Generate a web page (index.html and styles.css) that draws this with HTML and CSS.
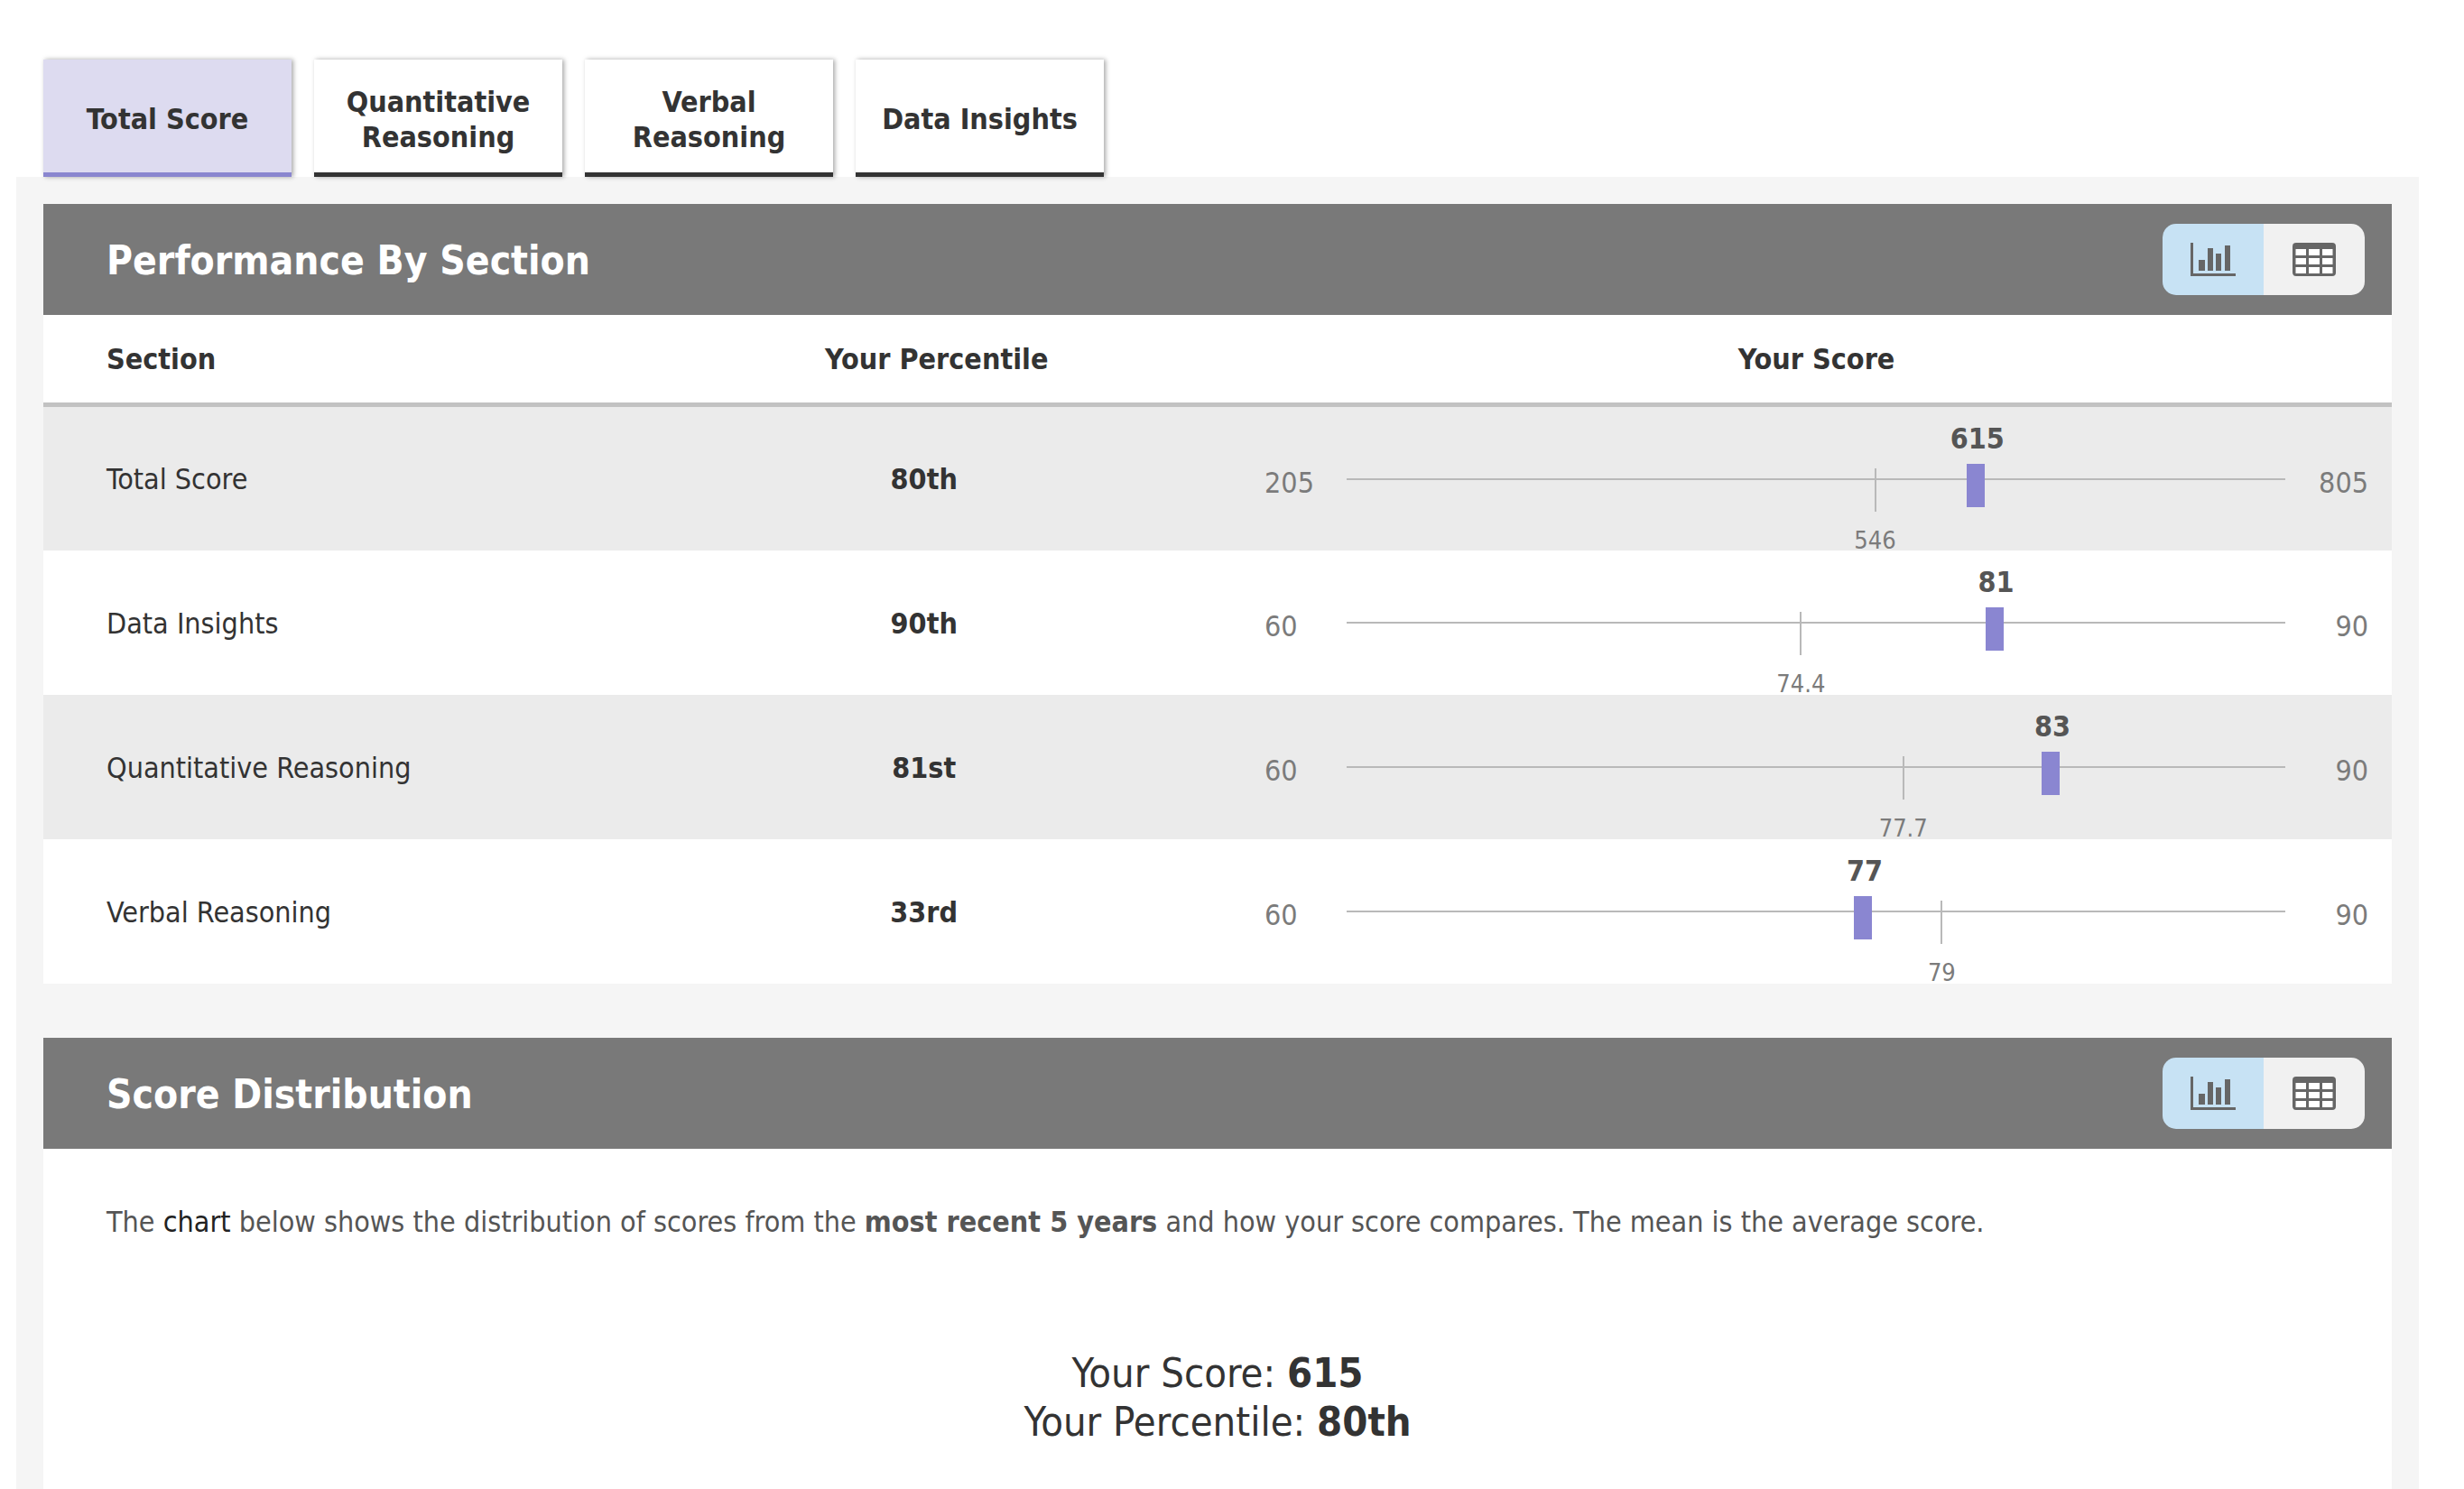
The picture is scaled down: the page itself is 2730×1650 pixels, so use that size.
FILE: index.html
```html
<!DOCTYPE html>
<html lang="en">

<head>
    <meta charset="UTF-8">
    <meta name="viewport" content="width=device-width, initial-scale=1.0">
    <title>Score Report</title>
    <link rel="stylesheet" href="styles.css">
</head>

<body>
    <!-- Icons shared by both view toggles -->
    <svg class="icon-defs" aria-hidden="true">
        <symbol id="icon-chart" viewBox="0 0 50 37">
            <path d="M0 0h3v34h47v3H0z M9 19h7v12H9z M19 6h6v25h-6z M28 12h6v19h-6z M38 3h6v28h-6z" />
        </symbol>
        <symbol id="icon-table" viewBox="0 0 48 37">
            <rect width="48" height="37" rx="4" />
            <path fill="#fff" d="M3.5 7H15v7H3.5z M18 7h12v7H18z M33 7h11.5v7H33z M3.5 17H15v7H3.5z M18 17h12v7H18z M33 17h11.5v7H33z M3.5 27H15v7H3.5z M18 27h12v7H18z M33 27h11.5v7H33z" />
        </symbol>
    </svg>

    <nav class="tabs">
        <button class="tab active" type="button">Total Score</button>
        <button class="tab" type="button">Quantitative Reasoning</button>
        <button class="tab" type="button">Verbal Reasoning</button>
        <button class="tab" type="button">Data Insights</button>
    </nav>

    <main class="report">
        <section class="card">
            <div class="card-header">
                <h2>Performance By Section</h2>
                <div class="view-toggle">
                    <button class="selected" type="button" aria-label="Chart view"><svg width="50" height="37"><use href="#icon-chart" /></svg></button>
                    <button type="button" aria-label="Table view"><svg width="48" height="37"><use href="#icon-table" /></svg></button>
                </div>
            </div>

            <table class="sections">
                <thead>
                    <tr>
                        <th class="col-section">Section</th>
                        <th class="col-percentile">Your Percentile</th>
                        <th class="col-score">Your Score</th>
                    </tr>
                </thead>
                <tbody>
                    <tr>
                        <td class="name">Total Score</td>
                        <td class="percentile">80th</td>
                        <td class="score">
                            <div class="range">
                                <span class="limit">205</span>
                                <div class="track">
                                    <div class="mean" style="left: 56.3%"><span>546</span></div>
                                    <div class="marker" style="left: 67%"><span>615</span></div>
                                </div>
                                <span class="limit max">805</span>
                            </div>
                        </td>
                    </tr>
                    <tr>
                        <td class="name">Data Insights</td>
                        <td class="percentile">90th</td>
                        <td class="score">
                            <div class="range">
                                <span class="limit">60</span>
                                <div class="track">
                                    <div class="mean" style="left: 48.4%"><span>74.4</span></div>
                                    <div class="marker" style="left: 69%"><span>81</span></div>
                                </div>
                                <span class="limit max">90</span>
                            </div>
                        </td>
                    </tr>
                    <tr>
                        <td class="name">Quantitative Reasoning</td>
                        <td class="percentile">81st</td>
                        <td class="score">
                            <div class="range">
                                <span class="limit">60</span>
                                <div class="track">
                                    <div class="mean" style="left: 59.3%"><span>77.7</span></div>
                                    <div class="marker" style="left: 75%"><span>83</span></div>
                                </div>
                                <span class="limit max">90</span>
                            </div>
                        </td>
                    </tr>
                    <tr>
                        <td class="name">Verbal Reasoning</td>
                        <td class="percentile">33rd</td>
                        <td class="score">
                            <div class="range">
                                <span class="limit">60</span>
                                <div class="track">
                                    <div class="mean" style="left: 63.4%"><span>79</span></div>
                                    <div class="marker" style="left: 55%"><span>77</span></div>
                                </div>
                                <span class="limit max">90</span>
                            </div>
                        </td>
                    </tr>
                </tbody>
            </table>
        </section>

        <section class="card distribution">
            <div class="card-header">
                <h2>Score Distribution</h2>
                <div class="view-toggle">
                    <button class="selected" type="button" aria-label="Chart view"><svg width="50" height="37"><use href="#icon-chart" /></svg></button>
                    <button type="button" aria-label="Table view"><svg width="48" height="37"><use href="#icon-table" /></svg></button>
                </div>
            </div>

            <p class="intro">The <span class="view-name">chart</span> below shows the distribution of scores from the <strong>most recent 5 years</strong> and how your score compares. The mean is the average score.</p>

            <div class="summary">
                <p>Your Score: <strong>615</strong></p>
                <p>Your Percentile: <strong>80th</strong></p>
            </div>
        </section>
    </main>
</body>

</html>
```
FILE: styles.css
```css
* {
    margin: 0;
    padding: 0;
    box-sizing: border-box;
}

body {
    font-family: Tahoma, "DejaVu Sans Condensed", "DejaVu Sans", sans-serif;
    font-size: 32px;
    line-height: 39px;
    color: #333;
    background-color: #fff;
    min-height: 100vh;
    display: flex;
    flex-direction: column;
    padding: 66px 50px 0 18px;
}

.icon-defs {
    display: none;
}

/* Tabs */
.tabs {
    position: relative;
    z-index: 1;
    display: flex;
    gap: 25px;
    padding: 0 30px;
}

.tab {
    width: 275px;
    height: 130px;
    padding: 8px 10px 0;
    border: none;
    border-bottom: 5px solid #333;
    background-color: #fff;
    box-shadow: 2px 0 5px rgba(0, 0, 0, 0.35);
    font: inherit;
    font-weight: bold;
    color: #333;
    cursor: pointer;
}

.tab.active {
    background-color: #dddbf0;
    border-bottom-color: #8a86cf;
}

/* Report body */
.report {
    flex: 1;
    display: flex;
    flex-direction: column;
    gap: 60px;
    padding: 30px 30px 0;
    background-color: #f5f5f5;
}

.card {
    background-color: #fff;
}

.card-header {
    display: flex;
    align-items: center;
    justify-content: space-between;
    padding: 22px 30px 22px 70px;
    background-color: #797979;
    color: #fff;
}

.card-header h2 {
    padding-top: 2px;
    font-size: 44px;
    line-height: 54px;
}

.view-toggle {
    display: flex;
    border-radius: 15px;
    overflow: hidden;
}

.view-toggle button {
    display: flex;
    align-items: center;
    justify-content: center;
    width: 112px;
    height: 79px;
    border: none;
    background-color: #f1f1f1;
    fill: #666;
    cursor: pointer;
}

.view-toggle .selected {
    background-color: #c7e2f4;
}

/* Section table */
.sections {
    width: 100%;
    table-layout: fixed;
    border-collapse: separate;
    border-spacing: 0;
}

.sections th {
    height: 102px;
    padding-top: 2px;
    border-bottom: 5px solid #c2c2c2;
}

.sections .col-section {
    width: 24%;
    padding-left: 70px;
    text-align: left;
}

.sections .col-percentile {
    width: 27%;
    padding-left: 28px;
}

.sections td {
    height: 160px;
}

.sections tbody tr:first-child td {
    height: 159px;
}

.sections tbody tr:nth-child(odd) {
    background-color: #ebebeb;
}

.sections .name {
    padding-left: 70px;
    white-space: nowrap;
}

.sections .name,
.sections .percentile {
    padding-top: 2px;
}

.sections .percentile {
    font-weight: bold;
    text-align: center;
}

.sections .score {
    padding: 0 26px;
}

/* Score range line */
.range {
    display: grid;
    grid-template-columns: 91px 1fr 92px;
    align-items: center;
}

.limit {
    padding-top: 9px;
    color: #7b7b7b;
}

.limit.max {
    text-align: right;
}

.track {
    position: relative;
    height: 2px;
    background-color: #b9b9b9;
}

.mean,
.marker {
    position: absolute;
    height: 48px;
    transform: translateX(-50%);
}

.mean {
    top: -11px;
    width: 2px;
    background-color: #b9b9b9;
}

.marker {
    top: -16px;
    width: 20px;
    background-color: #8a86d1;
}

.mean span,
.marker span {
    position: absolute;
    left: 50%;
    transform: translateX(-50%);
}

.mean span {
    top: 60px;
    font-size: 27px;
    color: #7b7b7b;
}

.marker span {
    bottom: 56px;
    padding-left: 4px;
    font-weight: bold;
    color: #555;
}

/* Score distribution */
.distribution {
    flex: 1;
}

.intro {
    padding: 62px 70px 0;
    color: #555;
}

.view-name {
    color: #222;
}

.summary {
    padding: 121px 0 46px;
    font-size: 45px;
    line-height: 54px;
    text-align: center;
}
```
